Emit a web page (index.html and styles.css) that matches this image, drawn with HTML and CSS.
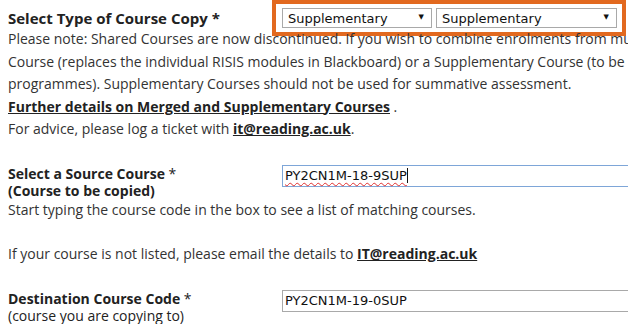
FILE: index.html
```html
<!DOCTYPE html>
<html lang="en">
<head>
    <meta charset="UTF-8">
    <meta name="viewport" content="width=device-width, initial-scale=1.0">
    <title>Course Copy</title>
    <link rel="stylesheet" href="styles.css">
</head>
<body>
    <form class="copy-form">
        <div class="form-row first">
            <label class="field-label">Select Type of Course Copy *</label>
            <div class="type-box">
                <span class="select-wrap narrow">
                    <select>
                        <option>Supplementary</option>
                        <option>Merged</option>
                    </select>
                </span>
                <span class="select-wrap wide">
                    <select>
                        <option>Supplementary</option>
                        <option>Merged</option>
                    </select>
                </span>
            </div>
        </div>
        <p class="note">
            Please note: Shared Courses are now discontinued. If you wish to combine enrolments from multiple modules, please request a Merged<br>
            Course (replaces the individual RISIS modules in Blackboard) or a Supplementary Course (to be used alongside the RISIS modules or<br>
            programmes). Supplementary Courses should not be used for summative assessment.<br>
            <a href="#" class="strong-link">Further details on Merged and Supplementary Courses</a> .<br>
            For advice, please log a ticket with <a href="#" class="strong-link">it@reading.ac.uk</a>.
        </p>

        <div class="form-row spaced">
            <label class="field-label">Select a Source Course <span class="req">*</span><br>(Course to be copied)</label>
            <div class="text-field focused"><span class="misspelt">PY2CN1M-18-9SUP</span><span class="caret"></span></div>
        </div>
        <p class="note">Start typing the course code in the box to see a list of matching courses.</p>
        <p class="note gap">If your course is not listed, please email the details to <a href="#" class="strong-link">IT@reading.ac.uk</a></p>

        <div class="form-row spaced">
            <label class="field-label">Destination Course Code <span class="req">*</span><br><span class="sub">(course you are copying to)</span></label>
            <div class="text-field">PY2CN1M-19-0SUP</div>
        </div>
    </form>
</body>
</html>
```

FILE: styles.css
```css
body {
    margin: 0;
    padding: 0 8px;
    font-family: 'Open Sans', sans-serif;
    font-size: 14px;
    color: #333;
    background: #fff;
    overflow: hidden;
}
.form-row {
    display: flex;
    align-items: flex-start;
}
.form-row.first {
    padding-top: 8px;
}
.form-row.spaced {
    margin-top: 24px;
}
.field-label {
    width: 274px;
    flex: none;
    font-weight: bold;
    color: #222;
    line-height: 17px;
}
.form-row.first .field-label {
    font-size: 15px;
    line-height: 20px;
}
.field-label .req {
    font-weight: normal;
}
.field-label .sub {
    font-weight: normal;
}
.type-box {
    display: flex;
    gap: 4px;
    border: 4px solid #e2691f;
    padding: 4px 5px 4px 6px;
    margin: -8px 0 -8px -10px;
}
.select-wrap {
    position: relative;
    display: block;
}
.select-wrap::after {
    content: "\25BC";
    position: absolute;
    right: 8px;
    top: 5px;
    font-family: 'DejaVu Sans', sans-serif;
    font-size: 7px;
    color: #111;
    pointer-events: none;
}
.select-wrap select {
    appearance: none;
    -webkit-appearance: none;
    display: block;
    height: 20px;
    padding: 0 20px 0 5px;
    border: 1px solid #a9a9a9;
    border-radius: 0;
    background: #fff;
    font-family: 'DejaVu Sans', sans-serif;
    font-size: 13px;
    color: #111;
}
.select-wrap.narrow select {
    width: 150px;
}
.select-wrap.wide select {
    width: 181px;
}
.note {
    margin: 0;
    line-height: 22.5px;
    white-space: nowrap;
}
.note.gap {
    margin-top: 22px;
}
.strong-link {
    font-weight: bold;
    color: #222;
    text-decoration: underline;
}
.text-field {
    box-sizing: border-box;
    flex: none;
    display: flex;
    align-items: center;
    width: 400px;
    height: 22px;
    padding: 0 2px;
    border: 1px solid #a9a9a9;
    background: #fff;
    font-family: 'DejaVu Sans', sans-serif;
    font-size: 13px;
    color: #111;
}
.text-field.focused {
    border-color: #7ea6d8;
}
.misspelt {
    text-decoration: underline wavy #e03030;
    text-decoration-thickness: 1px;
    text-underline-offset: 2px;
}
.caret {
    width: 1px;
    height: 15px;
    background: #111;
}
```
